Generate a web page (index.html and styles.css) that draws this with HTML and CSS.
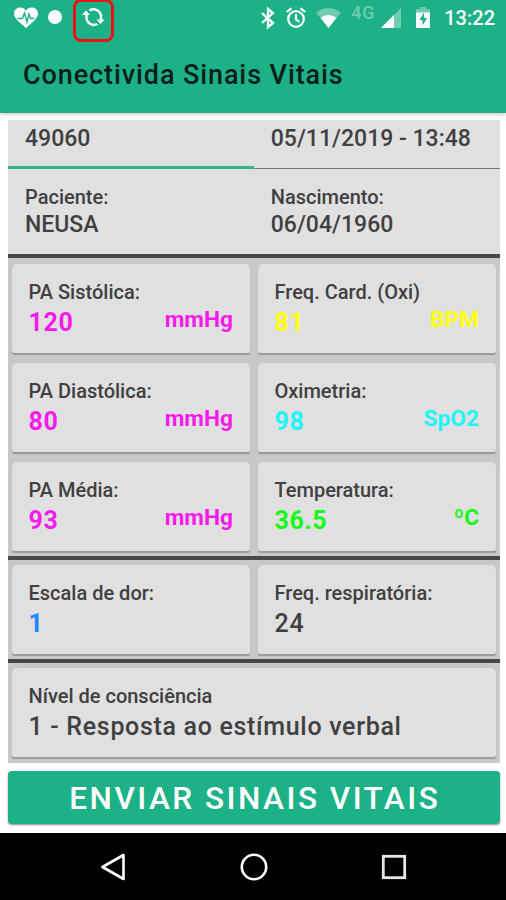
FILE: index.html
```html
<!DOCTYPE html>
<html lang="pt-BR">
<head>
  <meta charset="UTF-8" />
  <meta name="viewport" content="width=device-width, initial-scale=1.0" />
  <title>Conectivida Sinais Vitais</title>
  <link rel="stylesheet" href="styles.css">
</head>
<body>
  <header>
    <div class="status-bar">
      <svg class="heart" width="24" height="21" viewBox="0 0 24 21">
        <path fill="#fff" d="M12 21C5 15 0 11 0 6.500C0 3 2.800.5 6.200.5C8.600.5 10.800 1.700 12 3.700C13.200 1.700 15.400.5 17.800.5C21.200.5 24 3 24 6.500C24 11 19 15 12 21Z"/>
        <path fill="none" stroke="#1db187" stroke-width="1.400" d="M3.500 11.500h5L10.500 6l2.500 9L15 7l1.500 4.500H20.500"/>
      </svg>
      <span class="dot"></span>
      <span class="sync">
        <svg width="22" height="20" viewBox="0 0 22 20">
          <g fill="none" stroke="#fff" stroke-width="2.400">
            <path d="M3.500 7V10A7.500 7.500 0 0 0 14.500 17"/>
            <path d="M6.500 3.500A7.500 7.500 0 0 1 18 10V13"/>
          </g>
          <path fill="#fff" d="M-1 8L3 3.500L7 8ZM13.500 12.500H21.500L17.500 17Z"/>
        </svg>
      </span>
      <div class="status-right">
        <svg width="14" height="20" viewBox="0 0 14 20">
          <path fill="none" stroke="#fff" stroke-width="2.300" d="M1 5.200L12 15L7 19V1L12 5L1 14.800"/>
        </svg>
        <svg class="alarm" width="20" height="21" viewBox="0 0 20 21">
          <g fill="none" stroke="#fff" stroke-width="2.200">
            <circle cx="10" cy="12" r="7.800"/>
            <path d="M.8 5L5.500 1.200M19.200 5L14.500 1.200M10 7v5.500l3.500 2.300"/>
          </g>
        </svg>
        <svg class="wifi" width="25" height="20" viewBox="0 0 25 20">
          <path fill="#6fcdb0" d="M0 4.500C7-1.200 18-1.200 25 4.500L12.500 20Z"/>
          <path fill="#fff" d="M4.800 10C9 6 16 6 20.200 10L12.500 20Z"/>
        </svg>
        <span class="network">4G</span>
        <svg class="signal" width="20" height="20" viewBox="0 0 20 20">
          <path fill="#6fcdb0" d="M20 0V20H0Z"/>
          <path fill="#fff" d="M13 7V20H0Z"/>
        </svg>
        <svg class="battery" width="14" height="21" viewBox="0 0 14 21">
          <path fill="#6fcdb0" d="M4 0h6v2h4v4H0V2h4Z"/>
          <path fill="#fff" d="M0 5.500h14V21H0Z"/>
          <path fill="#1db187" d="M8 5.500L3.500 13H6.500V18.500L11 11H8Z"/>
        </svg>
        <span class="clock">13:22</span>
      </div>
    </div>
    <h1>Conectivida Sinais Vitais</h1>
  </header>

  <main>
    <div class="panel">
      <div class="tabs">
        <div class="tab active">49060</div>
        <div class="tab">05/11/2019 - 13:48</div>
      </div>
      <div class="patient">
        <div>
          <p class="label">Paciente:</p>
          <p class="info">NEUSA</p>
        </div>
        <div>
          <p class="label">Nascimento:</p>
          <p class="info">06/04/1960</p>
        </div>
      </div>

      <div class="cards vitals">
        <div class="card pressure">
          <p class="label">PA Sistólica:</p>
          <p class="value">120 <span class="unit">mmHg</span></p>
        </div>
        <div class="card heart-rate">
          <p class="label">Freq. Card. (Oxi)</p>
          <p class="value">81 <span class="unit">BPM</span></p>
        </div>
        <div class="card pressure">
          <p class="label">PA Diastólica:</p>
          <p class="value">80 <span class="unit">mmHg</span></p>
        </div>
        <div class="card oximetry">
          <p class="label">Oximetria:</p>
          <p class="value">98 <span class="unit">SpO2</span></p>
        </div>
        <div class="card pressure">
          <p class="label">PA Média:</p>
          <p class="value">93 <span class="unit">mmHg</span></p>
        </div>
        <div class="card temperature">
          <p class="label">Temperatura:</p>
          <p class="value">36.5 <span class="unit">ºC</span></p>
        </div>
      </div>

      <div class="cards">
        <div class="card pain">
          <p class="label">Escala de dor:</p>
          <p class="value">1</p>
        </div>
        <div class="card">
          <p class="label">Freq. respiratória:</p>
          <p class="value">24</p>
        </div>
      </div>

      <div class="cards">
        <div class="card wide">
          <p class="label">Nível de consciência</p>
          <p class="value">1 - Resposta ao estímulo verbal</p>
        </div>
      </div>
    </div>

    <button class="send-btn">ENVIAR SINAIS VITAIS</button>
  </main>

  <nav>
    <svg width="26" height="28" viewBox="0 0 26 28">
      <path fill="none" stroke="#fff" stroke-width="2.600" stroke-linejoin="round" d="M23.500 2V26L2.500 14Z"/>
    </svg>
    <svg width="28" height="28" viewBox="0 0 28 28">
      <circle cx="14" cy="14" r="12.200" fill="none" stroke="#fff" stroke-width="2.600"/>
    </svg>
    <svg width="26" height="26" viewBox="0 0 26 26">
      <rect x="2.300" y="2.300" width="21.400" height="21.400" fill="none" stroke="#e6e6e6" stroke-width="2.800"/>
    </svg>
  </nav>
</body>
</html>
```

FILE: styles.css
```css
:root {
  --green: #1db187;
  --card-bg: #e0e0e0;
  --text: #404040;
}
* {
  box-sizing: border-box;
}
body {
  margin: 0;
  height: 900px;
  display: flex;
  flex-direction: column;
  font-family: Roboto, sans-serif;
  font-weight: 500;
  background: #fff;
  color: var(--text);
  overflow: hidden;
}
p, h1 {
  margin: 0;
}
svg {
  display: block;
  flex: none;
  overflow: visible;
}

header {
  height: 113px;
  background: var(--green);
  box-shadow: 0 1px 4px rgba(90, 30, 50, 0.3);
}
.status-bar {
  display: flex;
  height: 42px;
  padding: 0 11px 0 14px;
  color: #fff;
}
.heart {
  margin-top: 7px;
}
.dot {
  width: 14px;
  height: 14px;
  margin: 10px 0 0 10px;
  border-radius: 50%;
  background: #fff;
}
.sync {
  width: 41px;
  height: 43px;
  margin: -1px 0 0 11px;
  padding: 5px 0 0 7px;
  border: 3px solid #e81316;
  border-radius: 8px;
}
.status-right {
  display: flex;
  margin-left: auto;
  padding-top: 8px;
}
.alarm {
  margin: -1px 0 0 11px;
}
.wifi {
  margin-left: 10px;
}
.network {
  margin: -5px 0 0 10px;
  color: #6fcdb0;
  font-size: 18px;
  line-height: 20px;
  letter-spacing: 0.8px;
}
.signal {
  margin-left: 6px;
}
.battery {
  margin: -1px 0 0 15px;
}
.clock {
  margin-left: 14px;
  font-size: 20px;
  line-height: 21px;
}
h1 {
  padding: 17px 0 0 23px;
  font-size: 27px;
  line-height: 32px;
  font-weight: 500;
  letter-spacing: 0.9px;
  color: #08201a;
}

main {
  flex: 1;
  padding: 7px 6.5px 0 8px;
}
.panel {
  height: 643px;
  background: #c8c8c8;
}
.tabs, .patient {
  display: grid;
  grid-template-columns: 1fr 1fr;
  background: var(--card-bg);
}
.tab {
  height: 49px;
  padding: 5px 0 0 17px;
  font-size: 23px;
  line-height: 27px;
  border-bottom: 1px solid #777;
}
.tab.active {
  border-bottom: 3px solid #35b388;
}
.patient {
  height: 85px;
  padding-top: 16px;
}
.patient > div {
  padding-left: 17px;
}
.label {
  font-size: 20px;
  line-height: 24px;
}
.info {
  font-size: 23px;
  line-height: 32px;
}

.cards {
  display: grid;
  grid-template-columns: 1fr 1fr;
  align-content: start;
  gap: 9.8px 7.5px;
  height: 103px;
  padding: 5px 3.5px 0;
  border-top: 4px solid #484848;
}
.vitals {
  height: 302px;
  padding-top: 6px;
}
.card {
  height: 89px;
  padding: 16px 17px 0;
  background: var(--card-bg);
  border-radius: 5px 5px 2px 2px;
  box-shadow: 0 1.500px 1px #999;
}
.wide {
  grid-column: span 2;
}
.value {
  display: flex;
  justify-content: space-between;
  font-size: 25px;
  line-height: 37px;
  letter-spacing: 0.68px;
}
.unit {
  font-size: 23px;
  line-height: 32px;
  letter-spacing: 0;
}
.pressure .value {
  color: #f51bea;
}
.heart-rate .value {
  color: #ffff12;
}
.oximetry .value {
  color: #1ff4f7;
}
.temperature .value {
  color: #12fa12;
}
.pain .value {
  color: #1e88ff;
}
/* the readings are heavier than the plain grey values */
.vitals .value, .pain .value {
  font-weight: 700;
  letter-spacing: 0.6px;
}
.vitals .unit {
  font-size: 22.7px;
  letter-spacing: 0;
}

.send-btn {
  display: block;
  width: 100%;
  height: 53px;
  margin-top: 8px;
  padding: 2px 0 0 2px;
  border: none;
  border-radius: 4px;
  background: var(--green);
  box-shadow: 0 1px 2px rgba(0, 0, 0, 0.45);
  color: #fff;
  font-family: inherit;
  font-size: 31.5px;
  font-weight: 500;
  letter-spacing: 2.500px;
}

nav {
  display: flex;
  align-items: center;
  justify-content: space-between;
  height: 67px;
  padding: 0 99px 0 100px;
  background: #000;
}
```
